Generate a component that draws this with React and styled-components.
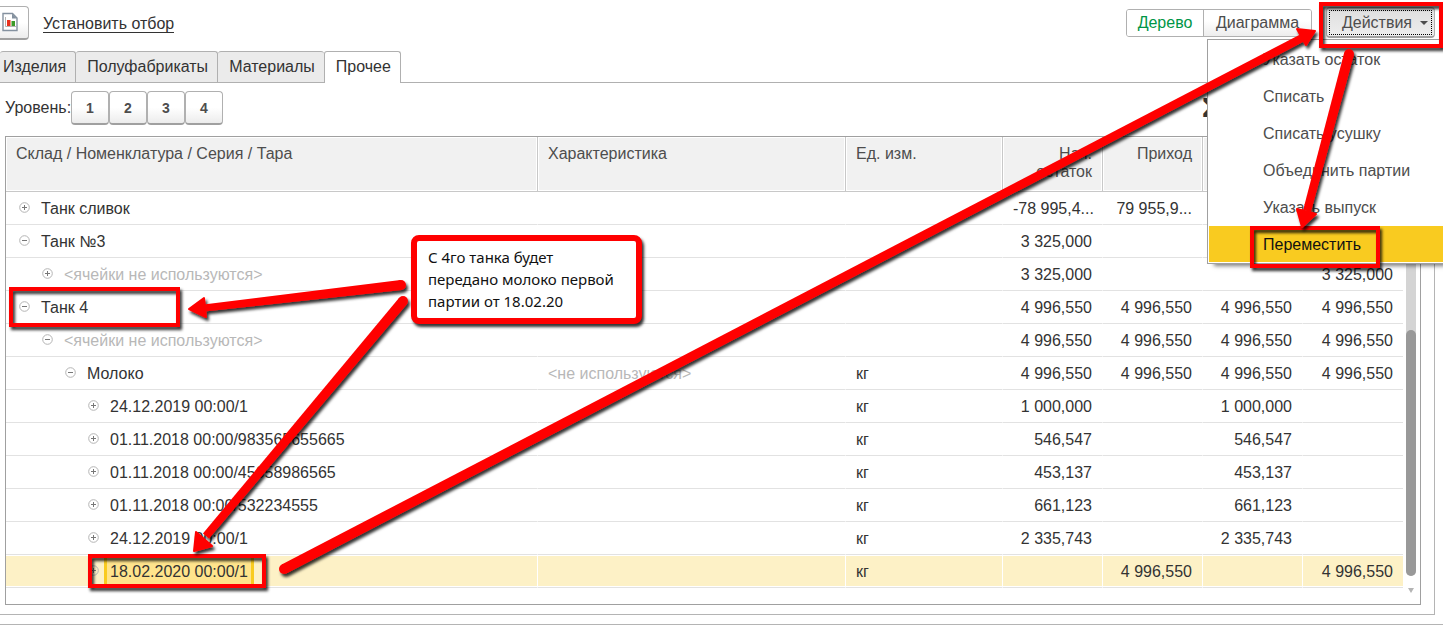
import React from "react";
import styled, { createGlobalStyle, css } from "styled-components";

const Global = createGlobalStyle`
  *, *::before, *::after { box-sizing: border-box; }
  body {
    margin: 0;
    background: #fff;
    color: #333;
    font: 16px/18px "Liberation Sans", Arial, sans-serif;
    overflow-x: hidden;
  }
  button { font: inherit; color: inherit; }
`;

const Page = styled.div`
  position: relative;
  overflow: hidden;
  padding-bottom: 17px;
`;

const Workspace = styled.main`
  border-bottom: 1px solid #b4b4b4;
  padding-bottom: 9px;
`;

const Toolbar = styled.header`
  display: flex;
  align-items: center;
  height: 45px;
  padding-right: 8px;
`;

const raised = css`
  border: 1px solid #b0b0b0;
  border-bottom: 2px solid #a0a0a0;
  border-radius: 4px;
  background: linear-gradient(#fff 50%, #ececec);
  padding: 0;
`;

const ReportButton = styled.button`
  ${raised}
  width: 34px;
  height: 34px;
  margin: 0 14px 0 -5px;
  padding-right: 4px;
  display: grid;
  place-items: center;
`;

const FilterLink = styled.a`
  color: #333;
  text-decoration: none;
  border-bottom: 1px solid #333;
  line-height: 17px;
  margin-top: 2px;
`;

const Segments = styled.div`
  display: flex;
  margin-left: auto;
  height: 28px;
  border: 1px solid #b0b0b0;
  border-radius: 3px;
  overflow: hidden;
`;

const Segment = styled.button`
  border: 0;
  border-left: ${(p) => (p.$on ? "0" : "1px solid #b0b0b0")};
  padding: 0;
  width: ${(p) => (p.$on ? "76px" : "108px")};
  color: ${(p) => (p.$on ? "#009646" : "#4d4d4d")};
  background: ${(p) => (p.$on ? "#fff" : "linear-gradient(#fff 40%, #ededed)")};
`;

const ActionsButton = styled.button`
  ${raised}
  display: flex;
  align-items: center;
  justify-content: flex-end;
  gap: 8px;
  width: 109px;
  height: 31px;
  margin-left: 14px;
  padding: 1px 6px 0 0;
  color: #4d4d4d;
  background: linear-gradient(#dedede, #eee);
  outline: 1px dotted #000;
  outline-offset: -4px;
`;

const Caret = styled.span`
  border: 4px solid transparent;
  border-top-color: #4d4d4d;
  border-bottom: 0;
`;

const Menu = styled.ul`
  position: absolute;
  z-index: 2;
  top: 39px;
  right: 0;
  width: 236px;
  margin: 0;
  padding: 1px 0 1px 1px;
  list-style: none;
  display: grid;
  gap: 1px;
  background: #fff;
  border: 1px solid #a0a0a0;
  border-right: 0;
  box-shadow: 5px 4px 4px -2px rgba(0, 0, 0, 0.5);
`;

const MenuItem = styled.button`
  display: block;
  width: 100%;
  height: 36px;
  border: 0;
  padding: 2px 0 0 54px;
  text-align: left;
  color: ${(p) => (p.$active ? "#111" : "#4d4d4d")};
  background: ${(p) => (p.$active ? "#f9cb20" : "#fff")};
`;

const Tabs = styled.div`
  display: flex;
  margin-top: 6px;
  height: 32px;
  border-bottom: 1px solid #b0b0b0;
`;

const Tab = styled.button`
  height: ${(p) => (p.$on ? "32px" : "31px")};
  border: 1px solid #b0b0b0;
  border-left-width: ${(p) => (p.$on ? "1px" : "0")};
  border-right-width: ${(p) => (p.$last ? "0" : "1px")};
  border-bottom: 0;
  border-radius: 3px 3px 0 0;
  padding: 0 9px ${(p) => (p.$on ? "2px" : "0")} 11px;
  background: ${(p) => (p.$on ? "#fff" : "#ebebeb")};
  &:first-child { padding-left: 3px; }
`;

const Panel = styled.section`
  margin-right: 8px;
  padding: 8px 13px 9px 5px;
  border: solid #b4b4b4;
  border-width: 0 1px 1px 0;
`;

const LevelBar = styled.div`
  display: flex;
  align-items: center;
  height: 34px;
  margin-bottom: 11px;
`;

const LevelLabel = styled.span`
  width: 66px;
  white-space: nowrap;
`;

const LevelButton = styled.button`
  ${raised}
  width: 38px;
  height: 34px;
  font-size: 14px;
  font-weight: bold;
  color: #4d4d4d;
`;

const SumMark = styled.span`
  margin-left: auto;
  width: 219px;
  font-size: 28px;
  font-weight: bold;
`;

const Grid = styled.div`
  display: flex;
  align-items: flex-start;
  border: 1px solid #a0a0a0;
`;

const Table = styled.table`
  flex: 1;
  min-width: 0;
  width: 100%;
  margin-bottom: 16px;
  table-layout: fixed;
  border-collapse: separate;
  border-spacing: 0;
`;

const HeadCell = styled.th`
  height: 55px;
  padding: 8px 10px 0;
  vertical-align: top;
  font-weight: normal;
  text-align: ${(p) => (p.$num ? "right" : "left")};
  color: #4d4d4d;
  background: #f1f1f1;
  border-right: 1px solid #c8c8c8;
  border-bottom: 1px solid #c8c8c8;
  box-shadow: inset 0 0 0 1px #fff;
  &:last-child { border-right: 0; }
`;

const Row = styled.tr`
  background: ${(p) => (p.$selected ? "#fdf1c6" : "#fff")};
`;

const Cell = styled.td`
  height: 33px;
  padding: 2px 10px 0;
  white-space: nowrap;
  text-align: ${(p) => (p.$num ? "right" : "left")};
  color: ${(p) => (p.$muted ? "#b8b8b8" : "#333")};
  border-right: 1px solid ${(p) => (p.$selected ? "#fff" : "transparent")};
  border-bottom: 1px solid #e2e2e2;
  box-shadow: ${(p) => (p.$selected ? "inset 0 1px #fff, inset 0 -1px #fff" : "none")};
  &:last-child { border-right: 0; }
`;

const Node = styled.div`
  display: flex;
  align-items: center;
  gap: 11px;
  height: 30px;
  padding-left: ${(p) => p.$level * 23 + 3}px;
`;

const Toggle = styled.button`
  border: 0;
  padding: 0;
  background: none;
  width: 11px;
  height: 11px;
  margin-top: -3px;
  svg { display: block; }
`;

const NodeText = styled.span`
  ${(p) =>
    p.$selected &&
    css`
      display: flex;
      align-items: center;
      height: 30px;
      margin: 0 -6px;
      padding: 0 3px;
      background: #ffe48c;
      border: solid #f9cb20;
      border-width: 0 3px;
    `}
`;

const Scrollbar = styled.div`
  display: flex;
  flex-direction: column;
  align-items: center;
  flex: 0 0 17px;
  padding: 55px 2px 0 0;
`;

const Track = styled.div`
  display: flex;
  align-items: flex-end;
  width: 10px;
  height: 384px;
  border-radius: 5px;
  background: #d4d4d4;
`;

const Thumb = styled.div`
  width: 10px;
  height: 246px;
  border-radius: 5px;
  background: #999;
`;

const DownMark = styled.span`
  margin-top: 12px;
  border: 3px solid transparent;
  border-top: 5px solid #b4b4b4;
  border-bottom: 0;
`;

const Marks = styled.svg`
  position: absolute;
  z-index: 3;
  inset: 0;
  width: 100%;
  height: 100%;
  pointer-events: none;
`;

const Note = styled.aside`
  position: absolute;
  z-index: 4;
  left: 411px;
  top: 235px;
  width: 231px;
  padding: 5px 11px 6px;
  border: 6px solid #f00;
  border-radius: 8px;
  background: #fff;
  color: #111;
  font: 15px/22px "Noto Sans", "Open Sans", sans-serif;
  box-shadow: 2px 3px 3px rgba(0, 0, 0, 0.8);
`;

const ReportIcon = () => (
  <svg width="16" height="20" viewBox="0 0 16 20" aria-hidden="true">
    <path d="M1 1.500h9.500l4.500 4.500v12.500H1z" fill="#fff" stroke="#84919f" strokeWidth="1.400" />
    <path d="M10 1.500V6.500H15z" fill="#84919f" />
    <path d="M3.500 5v9.500H14" fill="none" stroke="#b4b4b4" />
    <path d="M5 8h3.500v6H5z" fill="#e8301c" />
    <path d="M9.500 9H13V14H9.500z" fill="#3c9a28" />
  </svg>
);

const ToggleIcon = ({ open }) => (
  <svg width="11" height="11" viewBox="0 0 11 11" fill="none" aria-hidden="true">
    <circle cx="5.500" cy="5.500" r="4.800" stroke="#b4b4b4" />
    <path d={open ? "M3 5.500h5" : "M3 5.500h5M5.500 3v5"} stroke="#777" />
  </svg>
);

const menuItems = ["Указать остаток", "Списать", "Списать усушку", "Объединить партии", "Указать выпуск", "Переместить"];
const tabs = ["Изделия", "Полуфабрикаты", "Материалы", "Прочее"];
const columns = [
  { title: "Склад / Номенклатура / Серия / Тара" },
  { title: "Характеристика", width: 308 },
  { title: "Ед. изм.", width: 157 },
  { title: "Нач. остаток", width: 100, num: true },
  { title: "Приход", width: 100, num: true },
  { width: 100, num: true },
  { width: 100, num: true },
];
const full = ["4 996,550", "4 996,550", "4 996,550", "4 996,550"];
const rows = [
  { name: "Танк сливок", level: 0, values: ["-78 995,4...", "79 955,9...", "", ""] },
  { name: "Танк №3", level: 0, open: true, values: ["3 325,000", "", "", ""] },
  { name: "<ячейки не используются>", level: 1, muted: true, values: ["3 325,000", "", "", "3 325,000"] },
  { name: "Танк 4", level: 0, open: true, values: full },
  { name: "<ячейки не используются>", level: 1, open: true, muted: true, values: full },
  { name: "Молоко", level: 2, open: true, feature: "<не используются>", unit: "кг", values: full },
  { name: "24.12.2019 00:00/1", level: 3, unit: "кг", values: ["1 000,000", "", "1 000,000", ""] },
  { name: "01.11.2018 00:00/983565655665", level: 3, unit: "кг", values: ["546,547", "", "546,547", ""] },
  { name: "01.11.2018 00:00/45658986565", level: 3, unit: "кг", values: ["453,137", "", "453,137", ""] },
  { name: "01.11.2018 00:00/532234555", level: 3, unit: "кг", values: ["661,123", "", "661,123", ""] },
  { name: "24.12.2019 00:00/1", level: 3, unit: "кг", values: ["2 335,743", "", "2 335,743", ""] },
  { name: "18.02.2020 00:00/1", level: 3, unit: "кг", selected: true, values: ["", "4 996,550", "", "4 996,550"] },
];

const frames = [
  { x: 1321, y: 4, width: 120, height: 42 },
  { x: 1252, y: 228, width: 126, height: 38 },
  { x: 11, y: 289, width: 167, height: 36 },
  { x: 90, y: 556, width: 174, height: 30 },
];

const arrows = [
  { from: [401, 285], to: [204, 308], end: 3.5, head: "189,309 204,298 206,317" },
  { from: [403, 301], to: [206, 536], end: 4, head: "194,551 196,532 212,546" },
  { from: [284, 569], to: [1302, 38], end: 4, head: "1315,31 1306,45 1297,29" },
  { from: [1349, 54], to: [1307, 211], end: 4, head: "1302,227 1297,209 1316,214" },
];

// Outline of a shaft that narrows from a 10px start to its arrowhead.
function shaftPoints({ from: [x1, y1], to: [x2, y2], end }) {
  const len = Math.hypot(x2 - x1, y2 - y1);
  const nx = (y1 - y2) / len;
  const ny = (x2 - x1) / len;
  return [
    [x1 + nx * 5, y1 + ny * 5],
    [x2 + nx * end, y2 + ny * end],
    [x2 - nx * end, y2 - ny * end],
    [x1 - nx * 5, y1 - ny * 5],
  ].join(" ");
}

function Annotations() {
  return (
    <>
      <Marks aria-hidden="true">
        <defs>
          <filter id="drop" x="-10%" y="-20%" width="120%" height="150%">
            <feDropShadow dx="2" dy="3" stdDeviation="1.500" floodColor="#000" floodOpacity="0.800" />
          </filter>
        </defs>
        {frames.map((f) => (
          <rect key={f.x} {...f} fill="none" stroke="#f00" strokeWidth="4" filter="url(#drop)" />
        ))}
        {arrows.map((a) => (
          <g key={a.head} fill="#f00" filter="url(#drop)">
            <circle cx={a.from[0]} cy={a.from[1]} r="5" />
            <polygon points={shaftPoints(a)} />
            <polygon points={a.head} stroke="#f00" strokeWidth="2" strokeLinejoin="round" />
          </g>
        ))}
      </Marks>
      <Note>С 4го танка будет передано молоко первой партии от 18.02.20</Note>
    </>
  );
}

export default function App() {
  return (
    <Page>
      <Global />
      <Workspace>
        <Toolbar>
          <ReportButton aria-label="Отчет"><ReportIcon /></ReportButton>
          <FilterLink href="#filter">Установить отбор</FilterLink>
          <Segments>
            <Segment $on>Дерево</Segment>
            <Segment>Диаграмма</Segment>
          </Segments>
          <ActionsButton aria-haspopup="menu" aria-expanded="true">Действия<Caret /></ActionsButton>
        </Toolbar>
        <Menu>
          {menuItems.map((t, i) => (
            <li key={t}><MenuItem $active={i === 5}>{t}</MenuItem></li>
          ))}
        </Menu>
        <Tabs role="tablist">
          {tabs.map((t, i) => (
            <Tab key={t} role="tab" aria-selected={i === 3} $on={i === 3} $last={i === 2}>{t}</Tab>
          ))}
        </Tabs>
        <Panel>
          <LevelBar>
            <LevelLabel>Уровень:</LevelLabel>
            {[1, 2, 3, 4].map((n) => <LevelButton key={n}>{n}</LevelButton>)}
            <SumMark>Σ</SumMark>
          </LevelBar>
          <Grid>
            <Table>
              <colgroup>
                {columns.map((c, i) => <col key={i} width={c.width} />)}
              </colgroup>
              <thead>
                <tr>{columns.map((c, i) => <HeadCell key={i} $num={c.num}>{c.title}</HeadCell>)}</tr>
              </thead>
              <tbody>
                {rows.map((r, i) => (
                  <Row key={i} $selected={r.selected}>
                    <Cell $selected={r.selected} $muted={r.muted}>
                      <Node $level={r.level}>
                        <Toggle aria-label={r.open ? "Свернуть" : "Развернуть"}><ToggleIcon open={r.open} /></Toggle>
                        <NodeText $selected={r.selected}>{r.name}</NodeText>
                      </Node>
                    </Cell>
                    <Cell $selected={r.selected} $muted>{r.feature}</Cell>
                    <Cell $selected={r.selected}>{r.unit}</Cell>
                    {r.values.map((v, j) => <Cell key={j} $num $selected={r.selected}>{v}</Cell>)}
                  </Row>
                ))}
              </tbody>
            </Table>
            <Scrollbar>
              <Track><Thumb /></Track>
              <DownMark />
            </Scrollbar>
          </Grid>
        </Panel>
      </Workspace>
      <Annotations />
    </Page>
  );
}
